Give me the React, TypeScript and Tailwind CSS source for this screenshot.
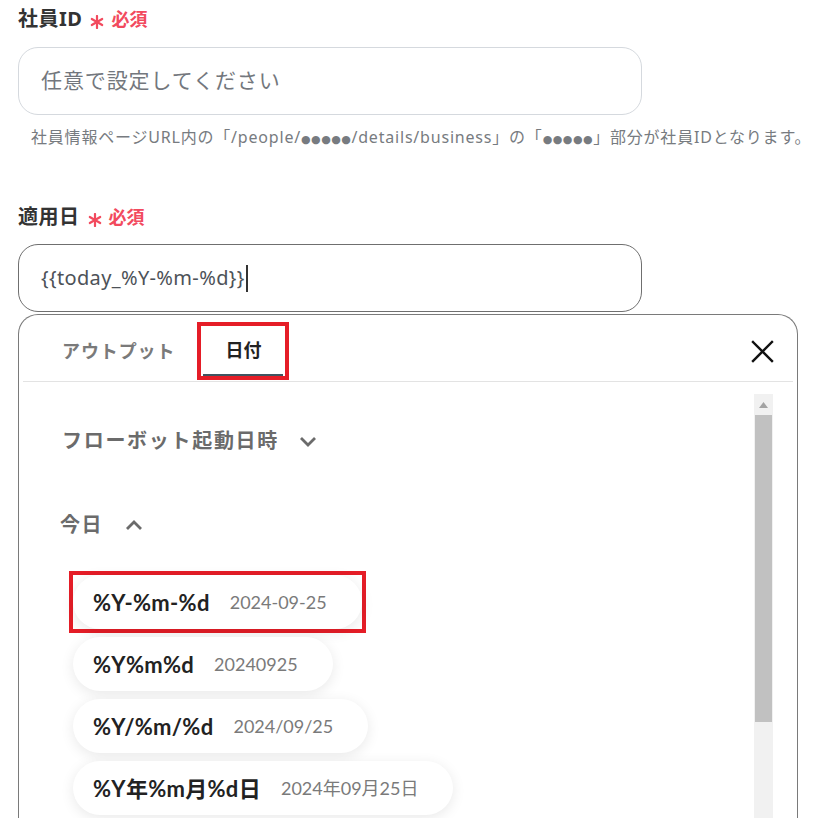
import React from "react";

const pills = [
  { name: "%Y-%m-%d", value: "2024-09-25", marked: true },
  { name: "%Y%m%d", value: "20240925" },
  { name: "%Y/%m/%d", value: "2024/09/25" },
  { name: "%Y年%m月%d日", value: "2024年09月25日" },
];

function Required() {
  return (
    <span className="ml-[8px] flex items-center text-[#f24a5e] font-bold">
      <svg width="14" height="14" viewBox="0 0 14 14" className="mt-[5px]">
        <g stroke="#f24a5e" strokeWidth="2.2" strokeLinecap="round">
          <line x1="7" y1="1" x2="7" y2="13" />
          <line x1="1.8" y1="4" x2="12.2" y2="10" />
          <line x1="1.8" y1="10" x2="12.2" y2="4" />
        </g>
      </svg>
      <span className="ml-[7px] text-[18px]">必須</span>
    </span>
  );
}

function Chevron({ up }: { up?: boolean }) {
  return (
    <svg width="18" height="11" viewBox="0 0 18 11">
      <polyline
        points={up ? "2,9 9,2 16,9" : "2,2 9,9 16,2"}
        fill="none"
        stroke="#6b6b6b"
        strokeWidth="2.8"
      />
    </svg>
  );
}

const Dots = () => (
  <span className="text-[11px] tracking-[0.5px] font-['DejaVu_Sans',sans-serif]">●●●●●</span>
);

export default function App() {
  return (
    <div className="w-[818px] h-[818px] overflow-hidden bg-white pl-[18px] font-['Noto_Sans','Noto_Sans_CJK_JP',sans-serif]">
      {/* 社員ID */}
      <div className="mt-[5px] h-[28px] flex items-center">
        <span className="text-[20px] font-bold tracking-[0.5px] text-[#333]">社員ID</span>
        <Required />
      </div>
      <div className="mt-[14px] h-[68px] w-[624px] rounded-[20px] border border-[#d5d9de] px-[22px] flex items-center text-[21px] tracking-[0.9px] text-[#73777d]">
        任意で設定してください
      </div>
      <div className="mt-[10px] h-[22px] pl-[13px] text-[16px] text-[#777b80] whitespace-nowrap tracking-[0.8px]">
        社員情報ページURL内の「/people/<Dots />/details/business」の「<Dots />」部分が社員IDとなります。
      </div>

      {/* 適用日 */}
      <div className="mt-[56px] h-[28px] flex items-center">
        <span className="text-[20px] font-bold tracking-[0.5px] text-[#333]">適用日</span>
        <Required />
      </div>
      <div className="mt-[13px] h-[68px] w-[624px] rounded-[20px] border border-[#6f6f6f] px-[22px] flex items-center text-[20px] tracking-[0.35px] text-[#4d5258]">
        {"{{today_%Y-%m-%d}}"}
        <span className="ml-[1px] w-[2px] h-[27px] bg-[#333]" />
      </div>

      {/* panel */}
      <div className="mt-[2px] w-[780px] h-[520px] rounded-t-[20px] border border-[#7a7a7a] border-b-0 flex flex-col">
        <div className="mx-[4px] mt-[7px] h-[60px] border-b border-[#e3e3e3] flex items-start">
          <div className="ml-[39px] h-[58px] flex items-center text-[18px] font-semibold tracking-[0.9px] text-[#7a7a7a]">
            アウトプット
          </div>
          <div className="ml-[22px] w-[92px] h-[58px] border-[4px] border-[#e51d27] flex flex-col">
            <div className="flex-1 flex items-center justify-center text-[18px] font-bold text-[#222]">日付</div>
            <div className="mx-[2px] h-[2px] bg-[#3f5460]" />
          </div>
          <div className="ml-auto mr-[19px] mt-[18px]">
            <svg width="23" height="23" viewBox="0 0 23 23">
              <g stroke="#111" strokeWidth="2.4" strokeLinecap="square">
                <line x1="2" y1="2" x2="21" y2="21" />
                <line x1="21" y1="2" x2="2" y2="21" />
              </g>
            </svg>
          </div>
        </div>

        <div className="flex-1 flex">
          <div className="flex-1">
            <div className="mt-[39px] pl-[43px] h-[40px] flex items-center">
              <span className="text-[20px] font-bold tracking-[1.7px] text-[#6b6b6b]">フローボット起動日時</span>
              <span className="ml-[20px] flex items-center"><Chevron /></span>
            </div>
            <div className="mt-[44px] pl-[41px] h-[40px] flex items-center">
              <span className="text-[20px] font-bold tracking-[1.4px] text-[#6b6b6b]">今日</span>
              <span className="ml-[22px] flex items-center"><Chevron up /></span>
            </div>
            <div className="mt-[30px] pl-[54px] flex flex-col items-start gap-[8px]">
              {pills.map((p) => {
                const pill = (
                  <div className="h-[54px] rounded-full bg-white shadow-[0_3px_14px_rgba(0,0,0,0.09)] pl-[20px] pr-[35px] flex items-center whitespace-nowrap font-['Lato','Noto_Sans_CJK_JP',sans-serif]">
                    <span className="text-[22px] font-bold tracking-[0.3px] text-[#222]">{p.name}</span>
                    <span className="ml-[20px] text-[18px] text-[#7a7a7a]">{p.value}</span>
                  </div>
                );
                return p.marked ? (
                  <div key={p.name} className="-ml-[4px] -my-[4px] border-[4px] border-[#e51d27]">
                    {pill}
                  </div>
                ) : (
                  <div key={p.name}>{pill}</div>
                );
              })}
            </div>
          </div>

          {/* scrollbar */}
          <div className="mt-[12px] mr-[24px] w-[19px] bg-[#f1f1f1] flex flex-col items-center">
            <div className="h-[21px] flex items-center justify-center">
              <svg width="9" height="6" viewBox="0 0 9 6">
                <polygon points="0,6 4.5,0 9,6" fill="#a3a3a3" />
              </svg>
            </div>
            <div className="w-[17px] h-[307px] bg-[#c1c1c1]" />
          </div>
        </div>
      </div>
    </div>
  );
}
